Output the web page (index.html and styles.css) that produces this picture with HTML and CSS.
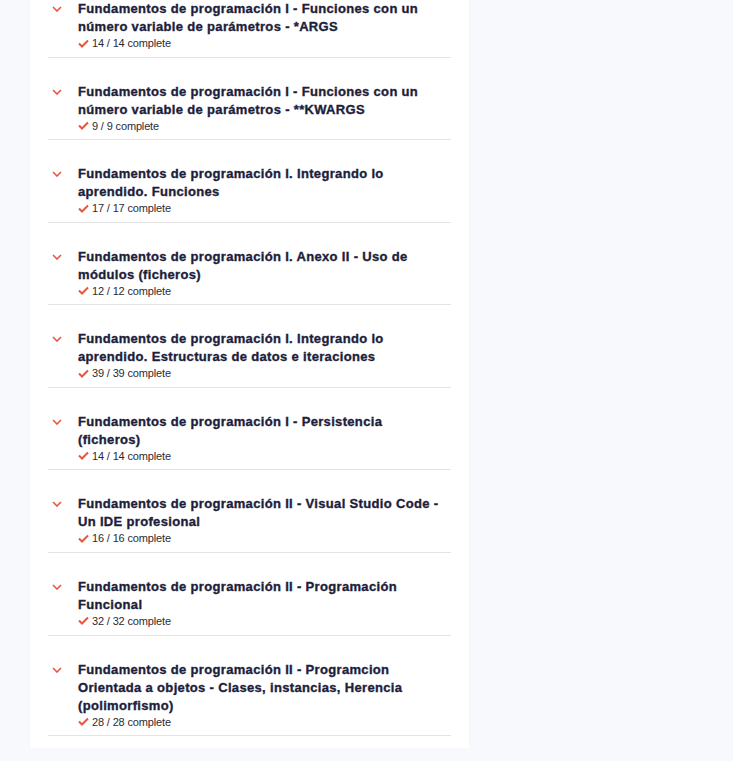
FILE: index.html
```html
<!DOCTYPE html>
<html lang="es">
<head>
<meta charset="utf-8">
<title>Fundamentos de programación</title>
<link rel="stylesheet" href="styles.css">
</head>
<body>
<div class="card">
  <div class="item">
    <svg class="chev" width="10" height="6" viewBox="0 0 10 6"><path d="M1 1 L5 5 L9 1" fill="none" stroke="#e8543f" stroke-width="1.6"/></svg>
    <div class="body">
      <div class="title">Fundamentos de programación I - Funciones con un número variable de parámetros - *ARGS</div>
      <div class="meta"><svg class="check" width="11" height="9" viewBox="0 0 11 9"><path d="M1 4.5 L4 7.5 L10 1.5" fill="none" stroke="#e8543f" stroke-width="2"/></svg>14 / 14 complete</div>
    </div>
  </div>
  <div class="item">
    <svg class="chev" width="10" height="6" viewBox="0 0 10 6"><path d="M1 1 L5 5 L9 1" fill="none" stroke="#e8543f" stroke-width="1.6"/></svg>
    <div class="body">
      <div class="title">Fundamentos de programación I - Funciones con un número variable de parámetros - **KWARGS</div>
      <div class="meta"><svg class="check" width="11" height="9" viewBox="0 0 11 9"><path d="M1 4.5 L4 7.5 L10 1.5" fill="none" stroke="#e8543f" stroke-width="2"/></svg>9 / 9 complete</div>
    </div>
  </div>
  <div class="item">
    <svg class="chev" width="10" height="6" viewBox="0 0 10 6"><path d="M1 1 L5 5 L9 1" fill="none" stroke="#e8543f" stroke-width="1.6"/></svg>
    <div class="body">
      <div class="title">Fundamentos de programación I. Integrando lo aprendido. Funciones</div>
      <div class="meta"><svg class="check" width="11" height="9" viewBox="0 0 11 9"><path d="M1 4.5 L4 7.5 L10 1.5" fill="none" stroke="#e8543f" stroke-width="2"/></svg>17 / 17 complete</div>
    </div>
  </div>
  <div class="item">
    <svg class="chev" width="10" height="6" viewBox="0 0 10 6"><path d="M1 1 L5 5 L9 1" fill="none" stroke="#e8543f" stroke-width="1.6"/></svg>
    <div class="body">
      <div class="title">Fundamentos de programación I. Anexo II - Uso de módulos (ficheros)</div>
      <div class="meta"><svg class="check" width="11" height="9" viewBox="0 0 11 9"><path d="M1 4.5 L4 7.5 L10 1.5" fill="none" stroke="#e8543f" stroke-width="2"/></svg>12 / 12 complete</div>
    </div>
  </div>
  <div class="item">
    <svg class="chev" width="10" height="6" viewBox="0 0 10 6"><path d="M1 1 L5 5 L9 1" fill="none" stroke="#e8543f" stroke-width="1.6"/></svg>
    <div class="body">
      <div class="title">Fundamentos de programación I. Integrando lo aprendido. Estructuras de datos e iteraciones</div>
      <div class="meta"><svg class="check" width="11" height="9" viewBox="0 0 11 9"><path d="M1 4.5 L4 7.5 L10 1.5" fill="none" stroke="#e8543f" stroke-width="2"/></svg>39 / 39 complete</div>
    </div>
  </div>
  <div class="item">
    <svg class="chev" width="10" height="6" viewBox="0 0 10 6"><path d="M1 1 L5 5 L9 1" fill="none" stroke="#e8543f" stroke-width="1.6"/></svg>
    <div class="body">
      <div class="title">Fundamentos de programación I - Persistencia (ficheros)</div>
      <div class="meta"><svg class="check" width="11" height="9" viewBox="0 0 11 9"><path d="M1 4.5 L4 7.5 L10 1.5" fill="none" stroke="#e8543f" stroke-width="2"/></svg>14 / 14 complete</div>
    </div>
  </div>
  <div class="item">
    <svg class="chev" width="10" height="6" viewBox="0 0 10 6"><path d="M1 1 L5 5 L9 1" fill="none" stroke="#e8543f" stroke-width="1.6"/></svg>
    <div class="body">
      <div class="title">Fundamentos de programación II - Visual Studio Code - Un IDE profesional</div>
      <div class="meta"><svg class="check" width="11" height="9" viewBox="0 0 11 9"><path d="M1 4.5 L4 7.5 L10 1.5" fill="none" stroke="#e8543f" stroke-width="2"/></svg>16 / 16 complete</div>
    </div>
  </div>
  <div class="item">
    <svg class="chev" width="10" height="6" viewBox="0 0 10 6"><path d="M1 1 L5 5 L9 1" fill="none" stroke="#e8543f" stroke-width="1.6"/></svg>
    <div class="body">
      <div class="title">Fundamentos de programación II - Programación Funcional</div>
      <div class="meta"><svg class="check" width="11" height="9" viewBox="0 0 11 9"><path d="M1 4.5 L4 7.5 L10 1.5" fill="none" stroke="#e8543f" stroke-width="2"/></svg>32 / 32 complete</div>
    </div>
  </div>
  <div class="item">
    <svg class="chev" width="10" height="6" viewBox="0 0 10 6"><path d="M1 1 L5 5 L9 1" fill="none" stroke="#e8543f" stroke-width="1.6"/></svg>
    <div class="body">
      <div class="title">Fundamentos de programación II - Programcion Orientada a objetos - Clases, instancias, Herencia (polimorfismo)</div>
      <div class="meta"><svg class="check" width="11" height="9" viewBox="0 0 11 9"><path d="M1 4.5 L4 7.5 L10 1.5" fill="none" stroke="#e8543f" stroke-width="2"/></svg>28 / 28 complete</div>
    </div>
  </div>
</div>
</body>
</html>
```
FILE: styles.css
```css
html, body {
  margin: 0;
  padding: 0;
  background: #f8f9fc;
  font-family: "Liberation Sans", Arial, sans-serif;
}
.card {
  width: 439px;
  margin: -26px 0 0 30px;
  padding: 0 18px 12px;
  box-sizing: border-box;
  background: #ffffff;
  box-shadow: 0 1px 2px rgba(0, 0, 0, 0.04);
}
.item {
  display: grid;
  grid-template-columns: 30px 1fr;
  padding: 25px 0 6.57px;
  border-bottom: 1px solid #e3e3e6;
}
.item:first-child {
  padding-top: 26px;
}
.chev {
  display: block;
  margin: 6px 0 0 4px;
}
.title {
  font-size: 13px;
  line-height: 18px;
  font-weight: 700;
  letter-spacing: 0.33px;
  -webkit-text-stroke: 0.35px #1d1e3b;
  color: #1d1e3b;
  padding-right: 8px;
}
.meta {
  display: flex;
  align-items: center;
  font-size: 11px;
  line-height: 14px;
  letter-spacing: -0.15px;
  color: #2b2b33;
}
.check {
  display: block;
  margin-right: 3px;
}
```
